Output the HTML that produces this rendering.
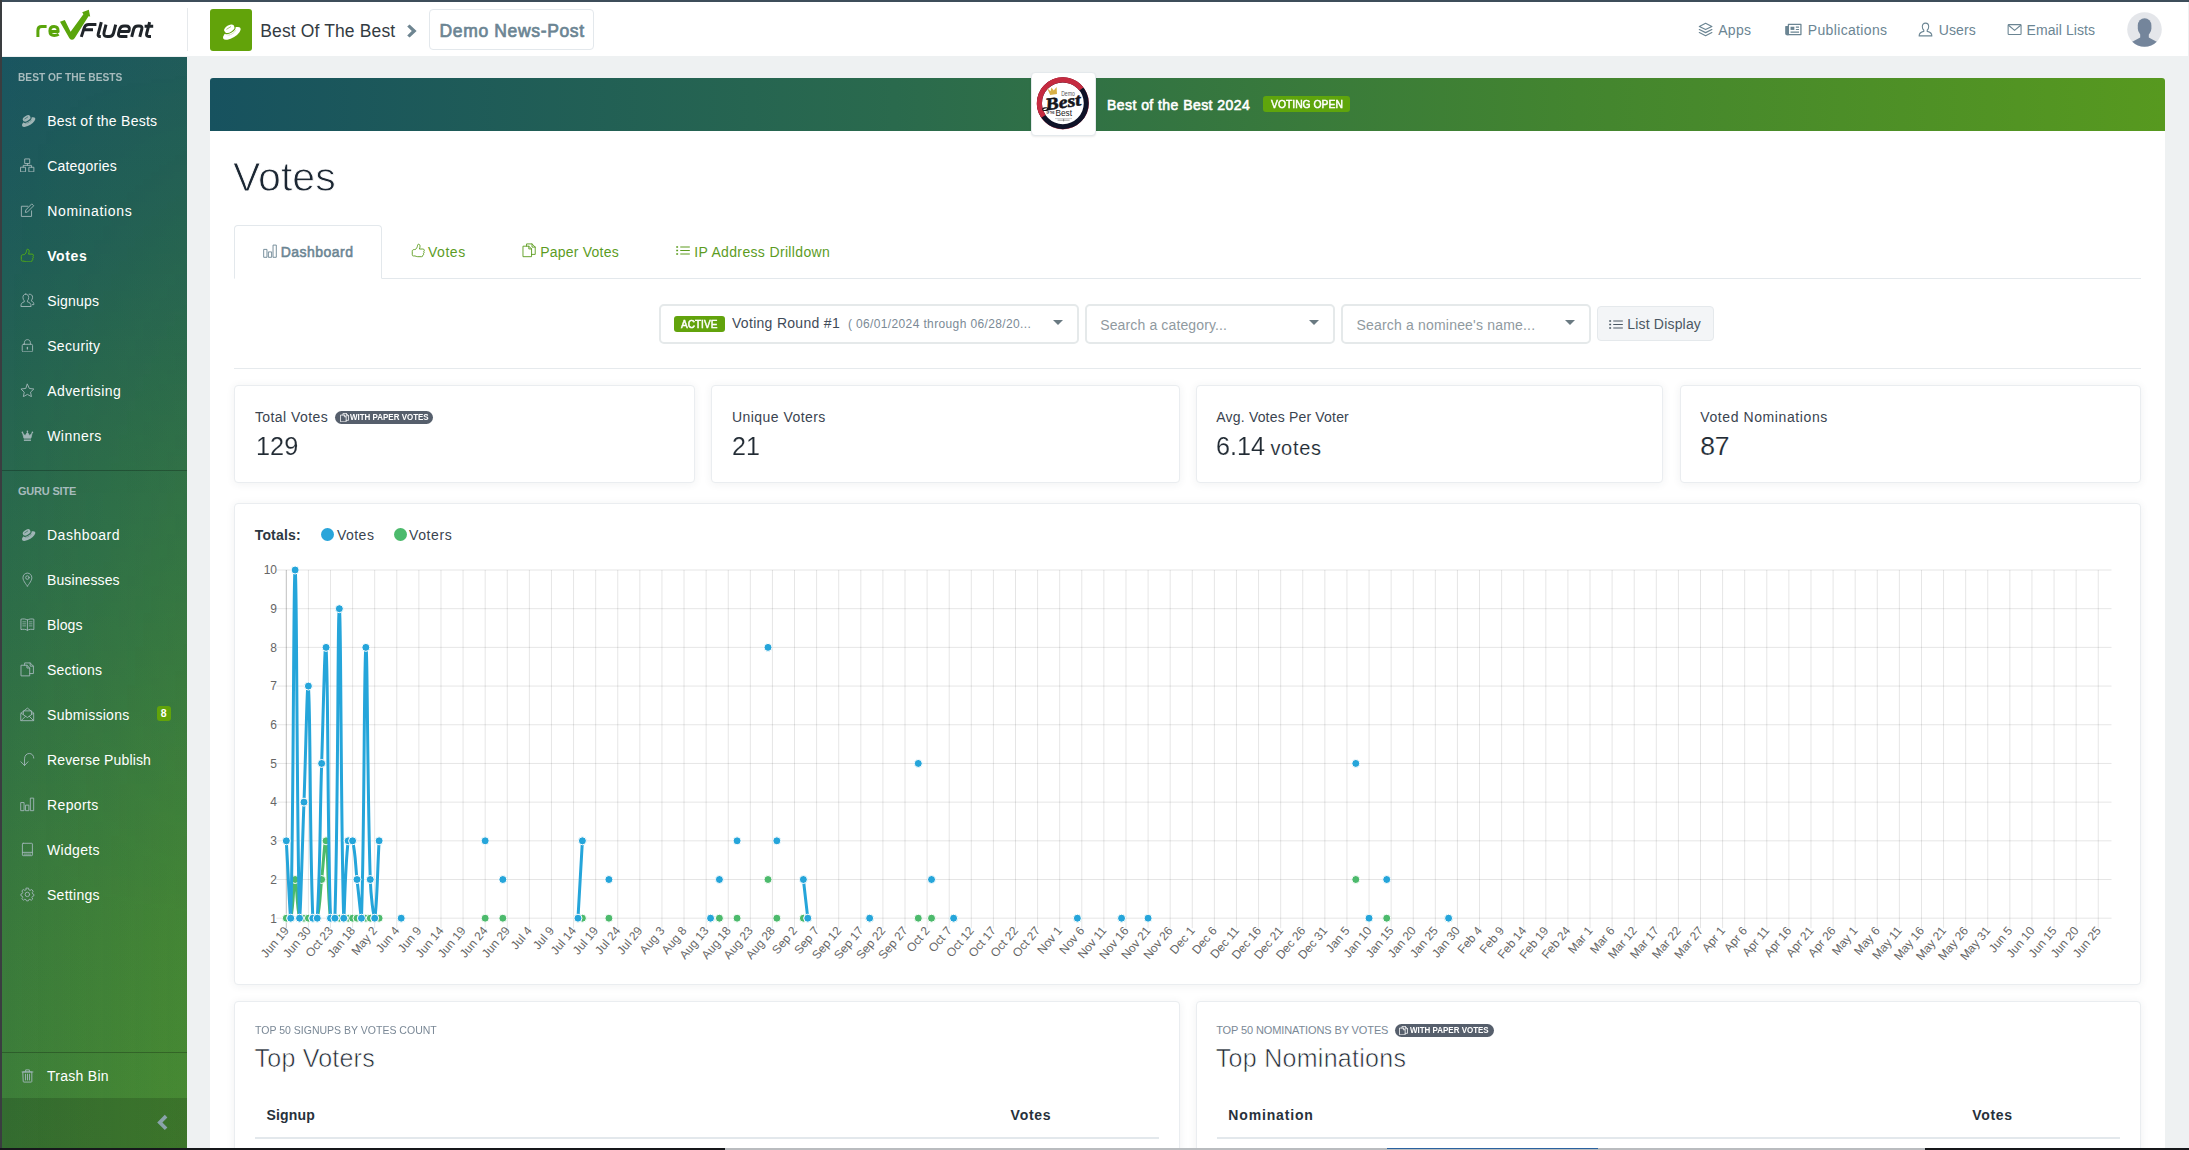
<!DOCTYPE html>
<html><head><meta charset="utf-8"><title>Votes</title>
<style>
html,body{margin:0;padding:0;}
body{width:2189px;height:1150px;overflow:hidden;position:relative;background:#eef1f2;font-family:"Liberation Sans",sans-serif;}
.t{position:absolute;white-space:pre;line-height:1;}
.abs{position:absolute;}
.card{position:absolute;background:#fff;border:1px solid #eaedf0;border-radius:4px;box-shadow:0 1px 9px rgba(40,55,70,0.07);box-sizing:border-box;}
.sel{position:absolute;background:#fff;border:2px solid #e5e9ea;border-radius:5px;box-sizing:border-box;}
.caret{position:absolute;width:0;height:0;border-left:5px solid transparent;border-right:5px solid transparent;border-top:5.5px solid #6a7a82;}
.pill{position:absolute;background:#565f6c;border-radius:7px;box-sizing:border-box;}
</style></head><body>
<div class="abs" style="left:0;top:0;width:2189px;height:2px;background:#3d4d5a"></div>
<div class="abs" style="left:0;top:0;width:2px;height:1150px;background:#3a3d40"></div>
<div class="abs" style="left:2px;top:2px;width:2186px;height:54px;background:#fff;"></div>
<div class="abs" style="left:187px;top:8px;width:1px;height:43px;background:#e6e9ec"></div>
<svg class="abs" style="left:30px;top:6px" width="130" height="40" viewBox="30 6 130 40">
<g fill="none" stroke="#5aa50b" stroke-width="3" stroke-linecap="butt" stroke-linejoin="round">
<path d="M37.9 37V30.4Q37.9 26.6 41.8 26.6H46.6"/>
<path d="M49.9 31.4H58.1C58.1 28.2 56.8 26.6 54.1 26.6C51.3 26.6 49.9 28.3 49.9 31C49.9 33.8 51.4 35.4 54.3 35.4C56 35.4 57.4 35 58.6 34.2"/>
</g>
<path d="M60 21.7L64.8 19.9L70.6 31.8L83.4 14.2L82.2 12.3L88.8 9.8L90.2 16.4L88.5 16.2L74.6 38.2Q72 41.2 69.4 38.2Z" fill="#5aa50b"/>
<g fill="none" stroke="#1f2429" stroke-width="3" stroke-linecap="butt" stroke-linejoin="round">
<path d="M81.3 36.9L84.3 27.6Q85.3 24.4 88.7 24.4H96.4M84.2 29.7H93"/>
<path d="M101.3 22.1L98.3 33.6Q97.5 36.6 100 36.6H100.8"/>
<path d="M106 24.6L104.1 32.2Q103 36.6 107.2 36.6H109.2Q112.6 36.6 113.5 33.2L115.7 24.6"/>
<path d="M118.8 31.4H128.8L129.2 29.8Q130 26 126 26H124Q120.6 26 119.7 29.2L118.6 33.4Q117.8 36.6 121.2 36.6H127.4"/>
<path d="M131.7 36.9L133.7 29.2Q134.5 26 137.9 26H139.2Q142.6 26 141.8 29.2L139.8 36.9"/>
<path d="M149.6 22.1L146.7 33.4Q145.9 36.6 148.8 36.6H151M144.6 26.3H153.2"/>
</g></svg>
<div class="abs" style="left:210px;top:9px;width:42px;height:42px;border-radius:3px;background:#62a30a"></div>
<svg class="abs" style="left:231.30px;top:32.20px;overflow:visible" width="1" height="1"><g transform="scale(0.950) rotate(-32)"><ellipse cx="0" cy="1.7" rx="10.6" ry="4.5" fill="#fff"/><path d="M-5.3 -4.9V-0.6A5.3 2.4 0 0 0 5.9 -0.6V-4.9Z" fill="#fff"/><ellipse cx="0.3" cy="-4.9" rx="5.6" ry="2.6" fill="#fff"/><path d="M-5.7 -2.5A5.8 2.7 0 0 0 6.3 -2.5" fill="none" stroke="#62a30a" stroke-width="1.1"/><path d="M-2.2 -4.9H2.6" fill="none" stroke="#62a30a" stroke-width="0.77" stroke-linecap="round" opacity="0.75"/><path d="M-4.6 0.9A5.6 2.4 0 0 0 5.4 0.9" fill="none" stroke="#62a30a" stroke-width="0.77" stroke-dasharray="1 1.1" opacity="0.7"/></g></svg>
<span class="t" style="left:260.26px;top:22.79px;font-size:17.5px;font-weight:400;color:#333b42;letter-spacing:0.129px;">Best Of The Best</span>
<svg class="abs" style="left:406px;top:24px" width="12" height="14" viewBox="0 0 12 14"><path d="M1.2 2.6L3.6 0.4L10.6 7L3.6 13.6L1.2 11.4L5.8 7Z" fill="#6e8591"/></svg>
<div class="abs" style="left:428.5px;top:8.5px;width:165px;height:41px;border:1px solid #e3e8ec;border-radius:4px;box-sizing:border-box;background:#fff"></div>
<span class="t" style="left:439.56px;top:22.79px;font-size:17.5px;font-weight:400;color:#6b8593;letter-spacing:0.647px;-webkit-text-stroke:0.7px #6b8593;">Demo News-Post</span>
<svg style="position:absolute;left:1698.40px;top:21.80px;color:#6b8593;" width="15.20" height="15.20" viewBox="0 0 16 16" fill="none" stroke="currentColor" stroke-width="1.25" stroke-linecap="round" stroke-linejoin="round"><path d="M8 1.4L14.6 4.7L8 8L1.4 4.7Z"/><path d="M1.4 7.9L8 11.2L14.6 7.9"/><path d="M1.4 11.1L8 14.4L14.6 11.1"/></svg>
<span class="t" style="left:1718.21px;top:23.05px;font-size:14px;font-weight:400;color:#6b8593;letter-spacing:0.318px;">Apps</span>
<svg style="position:absolute;left:1784.60px;top:21.20px;color:#6b8593;" width="17.00" height="17.00" viewBox="0 0 16 16" fill="none" stroke="currentColor" stroke-width="1.2" stroke-linecap="round" stroke-linejoin="round"><path d="M3.2 3.2H15V12.8H1.8C1.3 12.8 1 12.5 1 12V5.2H3.2Z"/><path d="M1 5.2H3.2V12.8H1.8C1.3 12.8 1 12.5 1 12Z" fill="currentColor"/><rect x="5.2" y="5.4" width="3.6" height="3" fill="currentColor" stroke="none"/><path d="M10.2 5.8H13.2M10.2 8H13.2M5.2 10.4H13.2" stroke-width="1.1" stroke-linecap="butt"/></svg>
<span class="t" style="left:1807.81px;top:23.05px;font-size:14px;font-weight:400;color:#6b8593;letter-spacing:0.343px;">Publications</span>
<svg style="position:absolute;left:1918.40px;top:21.60px;color:#6b8593;" width="15.00" height="15.00" viewBox="0 0 16 16" fill="none" stroke="currentColor" stroke-width="1.15" stroke-linecap="round" stroke-linejoin="round"><path d="M8 1.2C10.2 1.2 11.4 2.8 11.4 5C11.4 6.8 10.6 8 9.8 8.8V10C12.4 10.6 14.8 11.6 14.8 14.8H1.2C1.2 11.6 3.6 10.6 6.2 10V8.8C5.4 8 4.6 6.8 4.6 5C4.6 2.8 5.8 1.2 8 1.2Z"/></svg>
<span class="t" style="left:1938.71px;top:23.05px;font-size:14px;font-weight:400;color:#6b8593;letter-spacing:0.153px;">Users</span>
<svg style="position:absolute;left:2006.80px;top:21.60px;color:#6b8593;" width="15.20" height="15.20" viewBox="0 0 16 16" fill="none" stroke="currentColor" stroke-width="1.15" stroke-linecap="round" stroke-linejoin="round"><rect x="1.2" y="2.8" width="13.6" height="10.4" rx="0.8"/><path d="M1.6 3.4L8 8.8L14.4 3.4"/></svg>
<span class="t" style="left:2026.61px;top:23.05px;font-size:14px;font-weight:400;color:#6b8593;letter-spacing:0.069px;">Email Lists</span>
<svg class="abs" style="left:2127px;top:12px" width="35" height="35" viewBox="0 0 35 35"><defs><clipPath id="av"><circle cx="17.5" cy="17.5" r="17.3"/></clipPath></defs><circle cx="17.5" cy="17.5" r="17.3" fill="#e4e6ea"/><g clip-path="url(#av)" fill="#74859b"><rect x="10.8" y="6.2" width="13.6" height="17.6" rx="6.8" ry="7.4"/><path d="M13.2 21H21.8V25.6L30.6 30.2C31.6 30.8 32 31.6 32 33V36H3V33C3 31.6 3.4 30.8 4.4 30.2L13.2 25.6Z"/></g></svg>
<div class="abs" style="left:2px;top:57px;width:185px;height:1091px;background:linear-gradient(90deg,rgba(100,170,10,0) 0%,rgba(100,170,10,0.08) 100%),linear-gradient(180deg,#1a5560 0%,#1f5c58 17.7%,#27664f 35%,#2a6a4c 43%,#3a7a3c 81%,#3e7f39 100%);"></div>
<div class="abs" style="left:2px;top:57px;width:185px;height:1091px;background:linear-gradient(90deg,rgba(140,220,20,0),rgba(140,220,20,0.09));-webkit-mask-image:linear-gradient(180deg,transparent 0%,#000 80%);mask-image:linear-gradient(180deg,transparent 0%,#000 80%);"></div>
<div class="abs" style="left:2px;top:470px;width:185px;height:1px;background:rgba(0,0,0,0.25)"></div>
<div class="abs" style="left:2px;top:1052px;width:185px;height:1px;background:rgba(0,0,0,0.25)"></div>
<div class="abs" style="left:2px;top:1098px;width:185px;height:50px;background:rgba(0,0,0,0.15)"></div>
<svg class="abs" style="left:155px;top:1114px" width="14" height="17" viewBox="0 0 14 17"><path d="M9.8 0.8L12.4 3.4L7.4 8.4L12.4 13.4L9.8 16L2.2 8.4Z" fill="#8aa3ab"/></svg>
<span class="t" style="left:18.17px;top:71.59px;font-size:11px;font-weight:700;color:#a7bbbd;transform-origin:0 0;transform:scaleX(0.9279);">BEST OF THE BESTS</span>
<span class="t" style="left:17.94px;top:486.29px;font-size:11px;font-weight:700;color:#a7bbbd;letter-spacing:-0.198px;">GURU SITE</span>
<svg class="abs" style="left:27.80px;top:120.60px;overflow:visible" width="1" height="1"><g transform="scale(0.720) rotate(-32)"><ellipse cx="0" cy="1.7" rx="10.6" ry="4.5" fill="#9fb5b6"/><path d="M-5.3 -4.9V-0.6A5.3 2.4 0 0 0 5.9 -0.6V-4.9Z" fill="#9fb5b6"/><ellipse cx="0.3" cy="-4.9" rx="5.6" ry="2.6" fill="#9fb5b6"/><path d="M-5.7 -2.5A5.8 2.7 0 0 0 6.3 -2.5" fill="none" stroke="#1d595b" stroke-width="1.5"/><path d="M-2.2 -4.9H2.6" fill="none" stroke="#1d595b" stroke-width="1.05" stroke-linecap="round" opacity="0.75"/><path d="M-4.6 0.9A5.6 2.4 0 0 0 5.4 0.9" fill="none" stroke="#1d595b" stroke-width="1.05" stroke-dasharray="1 1.1" opacity="0.7"/></g></svg>
<span class="t" style="left:47.21px;top:113.65px;font-size:14px;font-weight:400;color:#fff;letter-spacing:0.252px;">Best of the Bests</span>
<svg style="position:absolute;left:19.80px;top:157.60px;color:#9fb5b6;" width="14.80" height="14.80" viewBox="0 0 16 16" fill="none" stroke="currentColor" stroke-width="1.0" stroke-linecap="round" stroke-linejoin="round"><rect x="5.5" y="1" width="5" height="5"/><rect x="1" y="10" width="5" height="5"/><rect x="10" y="10" width="5" height="5"/><path d="M8 6V8M3.5 10V8H12.5V10"/></svg>
<span class="t" style="left:47.21px;top:158.65px;font-size:14px;font-weight:400;color:#fff;letter-spacing:0.197px;">Categories</span>
<svg style="position:absolute;left:19.80px;top:202.60px;color:#9fb5b6;" width="14.80" height="14.80" viewBox="0 0 16 16" fill="none" stroke="currentColor" stroke-width="1.0" stroke-linecap="round" stroke-linejoin="round"><path d="M12.5 8.5V14.5H1.5V3.5H8.5"/><path d="M13 1.2L14.8 3L8 9.8L5.8 10.2L6.2 8Z"/></svg>
<span class="t" style="left:47.21px;top:203.65px;font-size:14px;font-weight:400;color:#fff;letter-spacing:0.665px;">Nominations</span>
<svg style="position:absolute;left:19.80px;top:247.60px;color:#55b012;" width="14.80" height="14.80" viewBox="0 0 16 16" fill="none" stroke="currentColor" stroke-width="1.0" stroke-linecap="round" stroke-linejoin="round"><path d="M1.4 8.6C1.4 7.6 2.4 7.2 3.6 7.2H4.6C6 6.4 7 4.6 7.2 2.4C7.3 0.8 9.9 0.9 9.9 3.4C9.9 4.6 9.5 5.8 9.2 6.6H13C15 6.6 15 8.9 13.9 9.2C14.9 9.9 14.5 11.3 13.5 11.5C14.2 12.3 13.7 13.5 12.8 13.6C13.1 14.5 12.5 15 11.6 15H7.4C6 15 5.2 14.4 4.4 14.2H2.6C1.6 14.2 1.4 13.6 1.4 12.8Z"/></svg>
<span class="t" style="left:47.21px;top:248.65px;font-size:14px;font-weight:700;color:#fff;letter-spacing:0.596px;">Votes</span>
<svg style="position:absolute;left:19.80px;top:292.60px;color:#9fb5b6;" width="14.80" height="14.80" viewBox="0 0 16 16" fill="none" stroke="currentColor" stroke-width="1.0" stroke-linecap="round" stroke-linejoin="round"><path d="M6.2 1.2C8.2 1.2 9.4 2.8 9.4 4.8C9.4 6.4 8.8 7.6 8 8.4V9.6C10.4 10.2 12 11.2 12 14.6H1C1 11.2 2.2 10.2 4.6 9.6V8.4C3.8 7.6 3.2 6.4 3.2 4.8C3.2 2.8 4.2 1.2 6.2 1.2Z"/><path d="M9.8 1.3C12.2 1 13.6 2.6 13.6 4.6C13.6 6.2 13 7.2 12.4 7.8V8.8C14 9.4 15 10.2 15 12.6H13.4"/></svg>
<span class="t" style="left:47.21px;top:293.65px;font-size:14px;font-weight:400;color:#fff;letter-spacing:0.197px;">Signups</span>
<svg style="position:absolute;left:19.80px;top:337.60px;color:#9fb5b6;" width="14.80" height="14.80" viewBox="0 0 16 16" fill="none" stroke="currentColor" stroke-width="1.0" stroke-linecap="round" stroke-linejoin="round"><rect x="2.4" y="6.8" width="11.2" height="8.2" rx="1.4"/><path d="M4.8 6.8V4.8C4.8 0.8 11.2 0.8 11.2 4.8V6.8"/><path d="M8 10.2V11.8" stroke-width="1.4"/></svg>
<span class="t" style="left:47.21px;top:338.65px;font-size:14px;font-weight:400;color:#fff;letter-spacing:0.328px;">Security</span>
<svg style="position:absolute;left:19.80px;top:382.60px;color:#9fb5b6;" width="14.80" height="14.80" viewBox="0 0 16 16" fill="none" stroke="currentColor" stroke-width="1.0" stroke-linecap="round" stroke-linejoin="round"><path d="M8 1.3L10.1 5.9L15 6.5L11.4 9.9L12.4 14.8L8 12.3L3.6 14.8L4.6 9.9L1 6.5L5.9 5.9Z"/></svg>
<span class="t" style="left:47.21px;top:383.65px;font-size:14px;font-weight:400;color:#fff;letter-spacing:0.431px;">Advertising</span>
<svg style="position:absolute;left:19.80px;top:427.60px;color:#9fb5b6;" width="14.80" height="14.80" viewBox="0 0 16 16" fill="none" stroke="currentColor" stroke-width="1.0" stroke-linecap="round" stroke-linejoin="round"><path d="M2.9 5.6L4.2 11H11.8L13.1 5.6L10.4 8.2L8 4.6L5.6 8.2Z" fill="currentColor" stroke-width="0.8"/><circle cx="2.6" cy="4.8" r="0.9" fill="currentColor" stroke="none"/><circle cx="8" cy="3.6" r="0.9" fill="currentColor" stroke="none"/><circle cx="13.4" cy="4.8" r="0.9" fill="currentColor" stroke="none"/><path d="M4.2 13.2H11.8" stroke-width="1.5" stroke-linecap="butt"/></svg>
<span class="t" style="left:47.21px;top:428.65px;font-size:14px;font-weight:400;color:#fff;letter-spacing:0.453px;">Winners</span>
<svg class="abs" style="left:27.80px;top:534.70px;overflow:visible" width="1" height="1"><g transform="scale(0.720) rotate(-32)"><ellipse cx="0" cy="1.7" rx="10.6" ry="4.5" fill="#9fb5b6"/><path d="M-5.3 -4.9V-0.6A5.3 2.4 0 0 0 5.9 -0.6V-4.9Z" fill="#9fb5b6"/><ellipse cx="0.3" cy="-4.9" rx="5.6" ry="2.6" fill="#9fb5b6"/><path d="M-5.7 -2.5A5.8 2.7 0 0 0 6.3 -2.5" fill="none" stroke="#2a6b4c" stroke-width="1.5"/><path d="M-2.2 -4.9H2.6" fill="none" stroke="#2a6b4c" stroke-width="1.05" stroke-linecap="round" opacity="0.75"/><path d="M-4.6 0.9A5.6 2.4 0 0 0 5.4 0.9" fill="none" stroke="#2a6b4c" stroke-width="1.05" stroke-dasharray="1 1.1" opacity="0.7"/></g></svg>
<span class="t" style="left:47.01px;top:528.15px;font-size:14px;font-weight:400;color:#fff;letter-spacing:0.510px;">Dashboard</span>
<svg style="position:absolute;left:19.80px;top:572.10px;color:#9fb5b6;" width="14.80" height="14.80" viewBox="0 0 16 16" fill="none" stroke="currentColor" stroke-width="1.0" stroke-linecap="round" stroke-linejoin="round"><path d="M8 15.2C8 15.2 3.2 9.8 3.2 6.3C3.2 3.3 5.3 1.2 8 1.2C10.7 1.2 12.8 3.3 12.8 6.3C12.8 9.8 8 15.2 8 15.2Z"/><circle cx="8" cy="6" r="1.9"/></svg>
<span class="t" style="left:47.01px;top:573.15px;font-size:14px;font-weight:400;color:#fff;letter-spacing:0.109px;">Businesses</span>
<svg style="position:absolute;left:19.80px;top:617.10px;color:#9fb5b6;" width="14.80" height="14.80" viewBox="0 0 16 16" fill="none" stroke="currentColor" stroke-width="1.0" stroke-linecap="round" stroke-linejoin="round"><path d="M8 3.2C6.4 2 3.4 1.8 1 2.4V13.6C3.4 13 6.4 13.2 8 14.4C9.6 13.2 12.6 13 15 13.6V2.4C12.6 1.8 9.6 2 8 3.2ZM8 3.2V14.4"/><path d="M3 5.2H6M3 7.4H6M3 9.6H6M10 5.2H13M10 7.4H13M10 9.6H13" stroke-width="0.8"/></svg>
<span class="t" style="left:47.01px;top:618.15px;font-size:14px;font-weight:400;color:#fff;letter-spacing:0.111px;">Blogs</span>
<svg style="position:absolute;left:19.80px;top:662.10px;color:#9fb5b6;" width="14.80" height="14.80" viewBox="0 0 16 16" fill="none" stroke="currentColor" stroke-width="1.0" stroke-linecap="round" stroke-linejoin="round"><path d="M1.5 3.5H7.5L10.5 6.5V15H1.5Z"/><path d="M7.5 3.5V6.5H10.5"/><path d="M5 3.5V1H11L14.5 4.5V12.5H10.5"/><path d="M11 1V4.5H14.5"/></svg>
<span class="t" style="left:47.01px;top:663.15px;font-size:14px;font-weight:400;color:#fff;letter-spacing:0.182px;">Sections</span>
<svg style="position:absolute;left:19.80px;top:707.10px;color:#9fb5b6;" width="14.80" height="14.80" viewBox="0 0 16 16" fill="none" stroke="currentColor" stroke-width="1.0" stroke-linecap="round" stroke-linejoin="round"><path d="M1.2 6.6L8 1.2L14.8 6.6V14.8H1.2Z"/><path d="M1.2 6.6L8 11.4L14.8 6.6"/><path d="M1.4 14.6L6 10M14.6 14.6L10 10"/><path d="M3.6 8V4.2H12.4V8" /></svg>
<span class="t" style="left:47.01px;top:708.15px;font-size:14px;font-weight:400;color:#fff;letter-spacing:0.290px;">Submissions</span>
<svg style="position:absolute;left:19.80px;top:752.10px;color:#9fb5b6;" width="14.80" height="14.80" viewBox="0 0 16 16" fill="none" stroke="currentColor" stroke-width="1.0" stroke-linecap="round" stroke-linejoin="round"><path d="M4.9 14.6V7.4C4.9 3.9 7.2 1.6 10 1.6C12.8 1.6 14.8 3.6 14.9 6.6"/><path d="M1 10.6L4.9 14.6L8.6 10.6"/></svg>
<span class="t" style="left:47.01px;top:753.15px;font-size:14px;font-weight:400;color:#fff;letter-spacing:0.138px;">Reverse Publish</span>
<svg style="position:absolute;left:19.80px;top:797.10px;color:#9fb5b6;" width="14.80" height="14.80" viewBox="0 0 16 16" fill="none" stroke="currentColor" stroke-width="1.0" stroke-linecap="round" stroke-linejoin="round"><rect x="1.2" y="6" width="3.2" height="8.8"/><rect x="6.4" y="8.8" width="3.2" height="6"/><rect x="11.6" y="1.2" width="3.2" height="13.6"/></svg>
<span class="t" style="left:47.01px;top:798.15px;font-size:14px;font-weight:400;color:#fff;letter-spacing:0.391px;">Reports</span>
<svg style="position:absolute;left:19.80px;top:842.10px;color:#9fb5b6;" width="14.80" height="14.80" viewBox="0 0 16 16" fill="none" stroke="currentColor" stroke-width="1.0" stroke-linecap="round" stroke-linejoin="round"><rect x="2.6" y="1.4" width="10.8" height="13.4" rx="0.8"/><path d="M2.6 11.2H13.4"/><path d="M4.4 13.1H11.6" stroke-width="0.9" stroke-dasharray="1.2 0.8"/></svg>
<span class="t" style="left:47.01px;top:843.15px;font-size:14px;font-weight:400;color:#fff;letter-spacing:0.333px;">Widgets</span>
<svg style="position:absolute;left:19.80px;top:887.10px;color:#9fb5b6;" width="14.80" height="14.80" viewBox="0 0 16 16" fill="none" stroke="currentColor" stroke-width="1.0" stroke-linecap="round" stroke-linejoin="round"><circle cx="8" cy="8" r="2.4"/><path d="M6.8 1.2H9.2L9.6 3.1L10.9 3.7L12.6 2.7L14.2 4.6L13.2 6.2L13.6 7.4L15 8V9.6L13.4 10.2L12.9 11.4L13.8 13L12.1 14.4L10.7 13.3L9.5 13.7L9 15H7L6.4 13.6L5.2 13.2L3.7 14.2L2 12.6L3 11.2L2.5 10L1 9.4V7.6L2.5 7L3 5.7L2 4.2L3.6 2.7L5.1 3.6L6.3 3.1Z"/></svg>
<span class="t" style="left:47.01px;top:888.15px;font-size:14px;font-weight:400;color:#fff;letter-spacing:0.283px;">Settings</span>
<div class="abs" style="left:157px;top:706px;width:14px;height:14.5px;border-radius:3px;background:#62a30a"></div>
<span class="t" style="left:160.76px;top:708.01px;font-size:10.5px;font-weight:700;color:#fff;letter-spacing:0.838px;">8</span>
<svg style="position:absolute;left:19.80px;top:1067.90px;color:#9fb5b6;" width="15.00" height="15.00" viewBox="0 0 16 16" fill="none" stroke="currentColor" stroke-width="1.0" stroke-linecap="round" stroke-linejoin="round"><path d="M3.4 4.2H12.6V14.4C12.6 14.8 12.3 15 12 15H4C3.7 15 3.4 14.8 3.4 14.4Z"/><path d="M2.2 4.2H13.8M6 4V2H10V4"/><path d="M5.9 6.6V12.8M8 6.6V12.8M10.1 6.6V12.8"/></svg>
<span class="t" style="left:47.01px;top:1068.85px;font-size:14px;font-weight:400;color:#fff;letter-spacing:0.273px;">Trash Bin</span>
<div class="abs" style="left:210px;top:78px;width:1955px;height:1072px;background:#fff;border-radius:3px 3px 0 0"></div>
<div class="abs" style="left:210px;top:78px;width:1955px;height:52.5px;border-radius:3px 3px 0 0;background:linear-gradient(90deg,#17525f 0%,#2a6a4d 35%,#43852f 70%,#57991f 100%)"></div>
<div class="abs" style="left:1031px;top:71.5px;width:65px;height:64px;background:#fff;border:1.5px solid #e4e9ec;border-radius:4px;box-sizing:border-box;box-shadow:0 1px 2px rgba(0,0,0,0.08)"></div>
<svg class="abs" style="left:1032px;top:72px" width="64" height="64" viewBox="1032 72 64 64">
<circle cx="1062.85" cy="103.30" r="25.6" fill="#fff" stroke="#c8283e" stroke-width="0.9"/>
<circle cx="1062.85" cy="103.30" r="23.40" fill="none" stroke="#0f1328" stroke-width="5"/>
<path d="M1081.39 89.02A23.40 23.40 0 0 0 1043.45 116.39" fill="none" stroke="#c52b40" stroke-width="5.2"/>
<path d="M1047.2 88.2L1050.6 91.2L1051.4 87.4L1053.8 90.4L1056.6 87L1057 94L1050.2 95Z" fill="#d8b046"/>
<text x="1061.2" y="96.3" font-family="'Liberation Sans',sans-serif" font-size="6.6" fill="#555" textLength="13.6" lengthAdjust="spacingAndGlyphs">Demo</text>
<g transform="rotate(-9 1061 101)"><text x="1045" y="108.2" font-family="'Liberation Serif',serif" font-style="italic" font-weight="700" font-size="17.5" fill="#15151b" stroke="#15151b" stroke-width="0.55" textLength="35.5" lengthAdjust="spacingAndGlyphs">Best</text>
<ellipse cx="1044.2" cy="106.6" rx="2.6" ry="1.3" fill="none" stroke="#15151b" stroke-width="1.1"/></g>
<text x="1055.4" y="115.8" font-family="'Liberation Sans',sans-serif" font-weight="400" font-size="9.8" fill="#1b1b22" textLength="16.6" lengthAdjust="spacingAndGlyphs">Best</text>
<text x="1046.4" y="113.6" font-family="'Liberation Sans',sans-serif" font-weight="700" font-size="3.8" fill="#1b1b22" textLength="8" lengthAdjust="spacingAndGlyphs">OF THE</text>
<path d="M1055 118.6H1072" stroke="#999" stroke-width="0.5"/><path d="M1057.6 120.2H1069.6M1063.6 118.8V121.4" stroke="#444" stroke-width="0.5"/>
</svg>
<span class="t" style="left:1107.01px;top:97.75px;font-size:14px;font-weight:400;color:#fff;letter-spacing:0.445px;-webkit-text-stroke:0.6px #fff;">Best of the Best 2024</span>
<div class="abs" style="left:1263px;top:96px;width:87px;height:16px;border-radius:3px;background:#5fa50c"></div>
<span class="t" style="left:1270.97px;top:98.69px;font-size:11px;font-weight:400;color:#fff;transform-origin:0 0;transform:scaleX(0.9406);-webkit-text-stroke:0.5px #fff;">VOTING OPEN</span>
<span class="t" style="left:232.88px;top:156.27px;font-size:41.5px;font-weight:400;color:#1c2733;transform-origin:0 0;transform:scaleX(0.9885);-webkit-text-stroke:0.9px #fff;">Votes</span>
<div class="abs" style="left:234px;top:278px;width:1907px;height:1px;background:#e3e8ec"></div>
<div class="abs" style="left:234px;top:224.5px;width:148px;height:54.5px;border:1px solid #e3e8ec;border-bottom:1px solid #fff;border-radius:4px 4px 0 0;box-sizing:border-box;background:#fff"></div>
<svg style="position:absolute;left:263.00px;top:243.60px;color:#6b8593;" width="14.40" height="14.40" viewBox="0 0 16 16" fill="none" stroke="currentColor" stroke-width="1.0" stroke-linecap="round" stroke-linejoin="round"><rect x="1.2" y="6" width="3.2" height="8.8"/><rect x="6.4" y="8.8" width="3.2" height="6"/><rect x="11.6" y="1.2" width="3.2" height="13.6"/></svg>
<span class="t" style="left:280.81px;top:244.75px;font-size:14px;font-weight:400;color:#6b8593;letter-spacing:0.460px;-webkit-text-stroke:0.55px #6b8593;">Dashboard</span>
<svg style="position:absolute;left:410.60px;top:243.20px;color:#5c9c1f;" width="14.60" height="14.60" viewBox="0 0 16 16" fill="none" stroke="currentColor" stroke-width="1.0" stroke-linecap="round" stroke-linejoin="round"><path d="M1.4 8.6C1.4 7.6 2.4 7.2 3.6 7.2H4.6C6 6.4 7 4.6 7.2 2.4C7.3 0.8 9.9 0.9 9.9 3.4C9.9 4.6 9.5 5.8 9.2 6.6H13C15 6.6 15 8.9 13.9 9.2C14.9 9.9 14.5 11.3 13.5 11.5C14.2 12.3 13.7 13.5 12.8 13.6C13.1 14.5 12.5 15 11.6 15H7.4C6 15 5.2 14.4 4.4 14.2H2.6C1.6 14.2 1.4 13.6 1.4 12.8Z"/></svg>
<span class="t" style="left:427.91px;top:244.75px;font-size:14px;font-weight:400;color:#5c9c1f;letter-spacing:0.561px;">Votes</span>
<svg style="position:absolute;left:522.40px;top:243.20px;color:#5c9c1f;" width="14.60" height="14.60" viewBox="0 0 16 16" fill="none" stroke="currentColor" stroke-width="1.0" stroke-linecap="round" stroke-linejoin="round"><path d="M1.5 3.5H7.5L10.5 6.5V15H1.5Z"/><path d="M7.5 3.5V6.5H10.5"/><path d="M5 3.5V1H11L14.5 4.5V12.5H10.5"/><path d="M11 1V4.5H14.5"/></svg>
<span class="t" style="left:540.21px;top:244.75px;font-size:14px;font-weight:400;color:#5c9c1f;letter-spacing:0.219px;">Paper Votes</span>
<svg style="position:absolute;left:674.70px;top:243.30px;color:#5c9c1f;" width="15.00" height="15.00" viewBox="0 0 16 16" fill="none" stroke="currentColor" stroke-width="1.0" stroke-linecap="round" stroke-linejoin="round"><g stroke-linecap="butt"><path d="M5.6 4.2H15.8M5.6 8H15.8M5.6 11.8H15.8" stroke-width="1.15"/><path d="M1.3 4.2H3.3M1.3 8H3.3M1.3 11.8H3.3" stroke-width="1.6"/></g></svg>
<span class="t" style="left:694.31px;top:244.75px;font-size:14px;font-weight:400;color:#5c9c1f;letter-spacing:0.345px;">IP Address Drilldown</span>
<div class="sel" style="left:659px;top:304px;width:420px;height:40px"></div>
<div class="abs" style="left:674px;top:316px;width:51px;height:16px;border-radius:3px;background:#62a30c"></div>
<span class="t" style="left:680.88px;top:318.59px;font-size:11px;font-weight:400;color:#fff;transform-origin:0 0;transform:scaleX(0.9147);-webkit-text-stroke:0.5px #fff;">ACTIVE</span>
<span class="t" style="left:732.01px;top:316.05px;font-size:14px;font-weight:400;color:#3f4b59;letter-spacing:0.296px;">Voting Round #1</span>
<span class="t" style="left:847.90px;top:317.74px;font-size:12px;font-weight:400;color:#7b8a96;letter-spacing:0.369px;">( 06/01/2024 through 06/28/20...</span>
<div class="caret" style="left:1053px;top:320px"></div>
<div class="sel" style="left:1085px;top:304px;width:249.5px;height:40px"></div>
<span class="t" style="left:1100.21px;top:317.95px;font-size:14px;font-weight:400;color:#909a9f;letter-spacing:0.133px;">Search a category...</span>
<div class="caret" style="left:1309px;top:320px"></div>
<div class="sel" style="left:1341px;top:304px;width:249.5px;height:40px"></div>
<span class="t" style="left:1356.41px;top:317.95px;font-size:14px;font-weight:400;color:#909a9f;letter-spacing:0.191px;">Search a nominee&#39;s name...</span>
<div class="caret" style="left:1564.5px;top:320px"></div>
<div class="abs" style="left:1597px;top:306px;width:117px;height:35px;background:#f3f5f7;border:1px solid #e5e9ec;border-radius:4px;box-sizing:border-box"></div>
<svg style="position:absolute;left:1607.70px;top:316.50px;color:#4a5763;" width="15.00" height="15.00" viewBox="0 0 16 16" fill="none" stroke="currentColor" stroke-width="1.0" stroke-linecap="round" stroke-linejoin="round"><g stroke-linecap="butt"><path d="M5.6 4.2H15.8M5.6 8H15.8M5.6 11.8H15.8" stroke-width="1.15"/><path d="M1.3 4.2H3.3M1.3 8H3.3M1.3 11.8H3.3" stroke-width="1.6"/></g></svg>
<span class="t" style="left:1627.31px;top:316.75px;font-size:14px;font-weight:400;color:#4a5763;letter-spacing:0.180px;">List Display</span>
<div class="abs" style="left:234px;top:368px;width:1907px;height:1px;background:#e6eaed"></div>
<div class="card" style="left:234px;top:385px;width:460.6px;height:98px"></div>
<div class="card" style="left:711px;top:385px;width:468.7px;height:98px"></div>
<div class="card" style="left:1196px;top:385px;width:467.4px;height:98px"></div>
<div class="card" style="left:1680px;top:385px;width:460.5px;height:98px"></div>
<span class="t" style="left:254.91px;top:410.15px;font-size:14px;font-weight:400;color:#3a4450;letter-spacing:0.428px;">Total Votes</span>
<div class="pill" style="left:335px;top:410.8px;width:98px;height:13.2px"></div>
<svg style="position:absolute;left:339.60px;top:412.60px;color:#fff;" width="9.40" height="9.40" viewBox="0 0 16 16" fill="none" stroke="currentColor" stroke-width="1.3" stroke-linecap="round" stroke-linejoin="round"><path d="M1.5 3.5H7.5L10.5 6.5V15H1.5Z"/><path d="M7.5 3.5V6.5H10.5"/><path d="M5 3.5V1H11L14.5 4.5V12.5H10.5"/><path d="M11 1V4.5H14.5"/></svg>
<span class="t" style="left:350.07px;top:413.20px;font-size:8.5px;font-weight:700;color:#fff;transform-origin:0 0;transform:scaleX(0.9376);">WITH PAPER VOTES</span>
<span class="t" style="left:255.54px;top:432.87px;font-size:26.5px;font-weight:400;color:#222b34;transform-origin:0 0;transform:scaleX(0.9549);-webkit-text-stroke:0.15px #fff;">129</span>
<span class="t" style="left:732.01px;top:410.15px;font-size:14px;font-weight:400;color:#3a4450;letter-spacing:0.452px;">Unique Voters</span>
<span class="t" style="left:732.15px;top:432.87px;font-size:26.5px;font-weight:400;color:#222b34;transform-origin:0 0;transform:scaleX(0.9465);-webkit-text-stroke:0.15px #fff;">21</span>
<span class="t" style="left:1216.31px;top:410.15px;font-size:14px;font-weight:400;color:#3a4450;letter-spacing:0.186px;">Avg. Votes Per Voter</span>
<span class="t" style="left:1216.34px;top:432.87px;font-size:26.5px;font-weight:400;color:#222b34;transform-origin:0 0;transform:scaleX(0.9503);-webkit-text-stroke:0.15px #fff;">6.14</span>
<span class="t" style="left:1270.46px;top:438.37px;font-size:20px;font-weight:400;color:#222b34;letter-spacing:0.667px;-webkit-text-stroke:0.15px #fff;">votes</span>
<span class="t" style="left:1700.31px;top:410.15px;font-size:14px;font-weight:400;color:#3a4450;letter-spacing:0.590px;">Voted Nominations</span>
<span class="t" style="left:1700.29px;top:432.87px;font-size:26.5px;font-weight:400;color:#222b34;letter-spacing:-0.158px;-webkit-text-stroke:0.15px #fff;">87</span>
<div class="card" style="left:234px;top:503px;width:1906.5px;height:482px"></div>
<span class="t" style="left:254.71px;top:528.15px;font-size:14px;font-weight:700;color:#2c3742;letter-spacing:0.169px;">Totals:</span>
<div class="abs" style="left:320.9px;top:527.9px;width:12.9px;height:12.9px;border-radius:50%;background:#2aa5da"></div>
<span class="t" style="left:336.91px;top:528.15px;font-size:14px;font-weight:400;color:#3a4450;letter-spacing:0.486px;">Votes</span>
<div class="abs" style="left:393.9px;top:527.9px;width:12.9px;height:12.9px;border-radius:50%;background:#4cba6c"></div>
<span class="t" style="left:408.91px;top:528.15px;font-size:14px;font-weight:400;color:#3a4450;letter-spacing:0.655px;">Voters</span>
<svg class="chart" style="position:absolute;left:234px;top:503px" width="1907" height="482" viewBox="234 503 1907 482" font-family="'Liberation Sans',sans-serif" font-size="12" fill="#666">
<path d="M308.40 570.00V928.20M330.49 570.00V928.20M352.59 570.00V928.20M374.69 570.00V928.20M396.78 570.00V928.20M418.88 570.00V928.20M440.98 570.00V928.20M463.07 570.00V928.20M485.17 570.00V928.20M507.27 570.00V928.20M529.37 570.00V928.20M551.46 570.00V928.20M573.56 570.00V928.20M595.66 570.00V928.20M617.75 570.00V928.20M639.85 570.00V928.20M661.95 570.00V928.20M684.04 570.00V928.20M706.14 570.00V928.20M728.24 570.00V928.20M750.33 570.00V928.20M772.43 570.00V928.20M794.53 570.00V928.20M816.62 570.00V928.20M838.72 570.00V928.20M860.82 570.00V928.20M882.92 570.00V928.20M905.01 570.00V928.20M927.11 570.00V928.20M949.21 570.00V928.20M971.30 570.00V928.20M993.40 570.00V928.20M1015.50 570.00V928.20M1037.59 570.00V928.20M1059.69 570.00V928.20M1081.79 570.00V928.20M1103.88 570.00V928.20M1125.98 570.00V928.20M1148.08 570.00V928.20M1170.17 570.00V928.20M1192.27 570.00V928.20M1214.37 570.00V928.20M1236.46 570.00V928.20M1258.56 570.00V928.20M1280.66 570.00V928.20M1302.76 570.00V928.20M1324.85 570.00V928.20M1346.95 570.00V928.20M1369.05 570.00V928.20M1391.14 570.00V928.20M1413.24 570.00V928.20M1435.34 570.00V928.20M1457.43 570.00V928.20M1479.53 570.00V928.20M1501.63 570.00V928.20M1523.72 570.00V928.20M1545.82 570.00V928.20M1567.92 570.00V928.20M1590.01 570.00V928.20M1612.11 570.00V928.20M1634.21 570.00V928.20M1656.30 570.00V928.20M1678.40 570.00V928.20M1700.50 570.00V928.20M1722.60 570.00V928.20M1744.69 570.00V928.20M1766.79 570.00V928.20M1788.89 570.00V928.20M1810.98 570.00V928.20M1833.08 570.00V928.20M1855.18 570.00V928.20M1877.27 570.00V928.20M1899.37 570.00V928.20M1921.47 570.00V928.20M1943.56 570.00V928.20M1965.66 570.00V928.20M1987.76 570.00V928.20M2009.85 570.00V928.20M2031.95 570.00V928.20M2054.05 570.00V928.20M2076.15 570.00V928.20M2098.24 570.00V928.20M276.30 918.20H2111.50M276.30 879.51H2111.50M276.30 840.82H2111.50M276.30 802.13H2111.50M276.30 763.44H2111.50M276.30 724.76H2111.50M276.30 686.07H2111.50M276.30 647.38H2111.50M276.30 608.69H2111.50M276.30 570.00H2111.50" stroke="rgba(0,0,0,0.1)" stroke-width="1" fill="none"/>
<path d="M286.30 570.00V928.20" stroke="rgba(0,0,0,0.25)" stroke-width="1" fill="none"/>
<text x="277.0" y="922.50" text-anchor="end">1</text>
<text x="277.0" y="883.81" text-anchor="end">2</text>
<text x="277.0" y="845.12" text-anchor="end">3</text>
<text x="277.0" y="806.43" text-anchor="end">4</text>
<text x="277.0" y="767.74" text-anchor="end">5</text>
<text x="277.0" y="729.06" text-anchor="end">6</text>
<text x="277.0" y="690.37" text-anchor="end">7</text>
<text x="277.0" y="651.68" text-anchor="end">8</text>
<text x="277.0" y="612.99" text-anchor="end">9</text>
<text x="277.0" y="574.30" text-anchor="end">10</text>
<text transform="translate(286.30 928.20) rotate(-50)" text-anchor="end" dy="0.35em">Jun 19</text>
<text transform="translate(308.40 928.20) rotate(-50)" text-anchor="end" dy="0.35em">Jun 30</text>
<text transform="translate(330.49 928.20) rotate(-50)" text-anchor="end" dy="0.35em">Oct 23</text>
<text transform="translate(352.59 928.20) rotate(-50)" text-anchor="end" dy="0.35em">Jan 18</text>
<text transform="translate(374.69 928.20) rotate(-50)" text-anchor="end" dy="0.35em">May 2</text>
<text transform="translate(396.78 928.20) rotate(-50)" text-anchor="end" dy="0.35em">Jun 4</text>
<text transform="translate(418.88 928.20) rotate(-50)" text-anchor="end" dy="0.35em">Jun 9</text>
<text transform="translate(440.98 928.20) rotate(-50)" text-anchor="end" dy="0.35em">Jun 14</text>
<text transform="translate(463.07 928.20) rotate(-50)" text-anchor="end" dy="0.35em">Jun 19</text>
<text transform="translate(485.17 928.20) rotate(-50)" text-anchor="end" dy="0.35em">Jun 24</text>
<text transform="translate(507.27 928.20) rotate(-50)" text-anchor="end" dy="0.35em">Jun 29</text>
<text transform="translate(529.37 928.20) rotate(-50)" text-anchor="end" dy="0.35em">Jul 4</text>
<text transform="translate(551.46 928.20) rotate(-50)" text-anchor="end" dy="0.35em">Jul 9</text>
<text transform="translate(573.56 928.20) rotate(-50)" text-anchor="end" dy="0.35em">Jul 14</text>
<text transform="translate(595.66 928.20) rotate(-50)" text-anchor="end" dy="0.35em">Jul 19</text>
<text transform="translate(617.75 928.20) rotate(-50)" text-anchor="end" dy="0.35em">Jul 24</text>
<text transform="translate(639.85 928.20) rotate(-50)" text-anchor="end" dy="0.35em">Jul 29</text>
<text transform="translate(661.95 928.20) rotate(-50)" text-anchor="end" dy="0.35em">Aug 3</text>
<text transform="translate(684.04 928.20) rotate(-50)" text-anchor="end" dy="0.35em">Aug 8</text>
<text transform="translate(706.14 928.20) rotate(-50)" text-anchor="end" dy="0.35em">Aug 13</text>
<text transform="translate(728.24 928.20) rotate(-50)" text-anchor="end" dy="0.35em">Aug 18</text>
<text transform="translate(750.33 928.20) rotate(-50)" text-anchor="end" dy="0.35em">Aug 23</text>
<text transform="translate(772.43 928.20) rotate(-50)" text-anchor="end" dy="0.35em">Aug 28</text>
<text transform="translate(794.53 928.20) rotate(-50)" text-anchor="end" dy="0.35em">Sep 2</text>
<text transform="translate(816.62 928.20) rotate(-50)" text-anchor="end" dy="0.35em">Sep 7</text>
<text transform="translate(838.72 928.20) rotate(-50)" text-anchor="end" dy="0.35em">Sep 12</text>
<text transform="translate(860.82 928.20) rotate(-50)" text-anchor="end" dy="0.35em">Sep 17</text>
<text transform="translate(882.92 928.20) rotate(-50)" text-anchor="end" dy="0.35em">Sep 22</text>
<text transform="translate(905.01 928.20) rotate(-50)" text-anchor="end" dy="0.35em">Sep 27</text>
<text transform="translate(927.11 928.20) rotate(-50)" text-anchor="end" dy="0.35em">Oct 2</text>
<text transform="translate(949.21 928.20) rotate(-50)" text-anchor="end" dy="0.35em">Oct 7</text>
<text transform="translate(971.30 928.20) rotate(-50)" text-anchor="end" dy="0.35em">Oct 12</text>
<text transform="translate(993.40 928.20) rotate(-50)" text-anchor="end" dy="0.35em">Oct 17</text>
<text transform="translate(1015.50 928.20) rotate(-50)" text-anchor="end" dy="0.35em">Oct 22</text>
<text transform="translate(1037.59 928.20) rotate(-50)" text-anchor="end" dy="0.35em">Oct 27</text>
<text transform="translate(1059.69 928.20) rotate(-50)" text-anchor="end" dy="0.35em">Nov 1</text>
<text transform="translate(1081.79 928.20) rotate(-50)" text-anchor="end" dy="0.35em">Nov 6</text>
<text transform="translate(1103.88 928.20) rotate(-50)" text-anchor="end" dy="0.35em">Nov 11</text>
<text transform="translate(1125.98 928.20) rotate(-50)" text-anchor="end" dy="0.35em">Nov 16</text>
<text transform="translate(1148.08 928.20) rotate(-50)" text-anchor="end" dy="0.35em">Nov 21</text>
<text transform="translate(1170.17 928.20) rotate(-50)" text-anchor="end" dy="0.35em">Nov 26</text>
<text transform="translate(1192.27 928.20) rotate(-50)" text-anchor="end" dy="0.35em">Dec 1</text>
<text transform="translate(1214.37 928.20) rotate(-50)" text-anchor="end" dy="0.35em">Dec 6</text>
<text transform="translate(1236.46 928.20) rotate(-50)" text-anchor="end" dy="0.35em">Dec 11</text>
<text transform="translate(1258.56 928.20) rotate(-50)" text-anchor="end" dy="0.35em">Dec 16</text>
<text transform="translate(1280.66 928.20) rotate(-50)" text-anchor="end" dy="0.35em">Dec 21</text>
<text transform="translate(1302.76 928.20) rotate(-50)" text-anchor="end" dy="0.35em">Dec 26</text>
<text transform="translate(1324.85 928.20) rotate(-50)" text-anchor="end" dy="0.35em">Dec 31</text>
<text transform="translate(1346.95 928.20) rotate(-50)" text-anchor="end" dy="0.35em">Jan 5</text>
<text transform="translate(1369.05 928.20) rotate(-50)" text-anchor="end" dy="0.35em">Jan 10</text>
<text transform="translate(1391.14 928.20) rotate(-50)" text-anchor="end" dy="0.35em">Jan 15</text>
<text transform="translate(1413.24 928.20) rotate(-50)" text-anchor="end" dy="0.35em">Jan 20</text>
<text transform="translate(1435.34 928.20) rotate(-50)" text-anchor="end" dy="0.35em">Jan 25</text>
<text transform="translate(1457.43 928.20) rotate(-50)" text-anchor="end" dy="0.35em">Jan 30</text>
<text transform="translate(1479.53 928.20) rotate(-50)" text-anchor="end" dy="0.35em">Feb 4</text>
<text transform="translate(1501.63 928.20) rotate(-50)" text-anchor="end" dy="0.35em">Feb 9</text>
<text transform="translate(1523.72 928.20) rotate(-50)" text-anchor="end" dy="0.35em">Feb 14</text>
<text transform="translate(1545.82 928.20) rotate(-50)" text-anchor="end" dy="0.35em">Feb 19</text>
<text transform="translate(1567.92 928.20) rotate(-50)" text-anchor="end" dy="0.35em">Feb 24</text>
<text transform="translate(1590.01 928.20) rotate(-50)" text-anchor="end" dy="0.35em">Mar 1</text>
<text transform="translate(1612.11 928.20) rotate(-50)" text-anchor="end" dy="0.35em">Mar 6</text>
<text transform="translate(1634.21 928.20) rotate(-50)" text-anchor="end" dy="0.35em">Mar 12</text>
<text transform="translate(1656.30 928.20) rotate(-50)" text-anchor="end" dy="0.35em">Mar 17</text>
<text transform="translate(1678.40 928.20) rotate(-50)" text-anchor="end" dy="0.35em">Mar 22</text>
<text transform="translate(1700.50 928.20) rotate(-50)" text-anchor="end" dy="0.35em">Mar 27</text>
<text transform="translate(1722.60 928.20) rotate(-50)" text-anchor="end" dy="0.35em">Apr 1</text>
<text transform="translate(1744.69 928.20) rotate(-50)" text-anchor="end" dy="0.35em">Apr 6</text>
<text transform="translate(1766.79 928.20) rotate(-50)" text-anchor="end" dy="0.35em">Apr 11</text>
<text transform="translate(1788.89 928.20) rotate(-50)" text-anchor="end" dy="0.35em">Apr 16</text>
<text transform="translate(1810.98 928.20) rotate(-50)" text-anchor="end" dy="0.35em">Apr 21</text>
<text transform="translate(1833.08 928.20) rotate(-50)" text-anchor="end" dy="0.35em">Apr 26</text>
<text transform="translate(1855.18 928.20) rotate(-50)" text-anchor="end" dy="0.35em">May 1</text>
<text transform="translate(1877.27 928.20) rotate(-50)" text-anchor="end" dy="0.35em">May 6</text>
<text transform="translate(1899.37 928.20) rotate(-50)" text-anchor="end" dy="0.35em">May 11</text>
<text transform="translate(1921.47 928.20) rotate(-50)" text-anchor="end" dy="0.35em">May 16</text>
<text transform="translate(1943.56 928.20) rotate(-50)" text-anchor="end" dy="0.35em">May 21</text>
<text transform="translate(1965.66 928.20) rotate(-50)" text-anchor="end" dy="0.35em">May 26</text>
<text transform="translate(1987.76 928.20) rotate(-50)" text-anchor="end" dy="0.35em">May 31</text>
<text transform="translate(2009.85 928.20) rotate(-50)" text-anchor="end" dy="0.35em">Jun 5</text>
<text transform="translate(2031.95 928.20) rotate(-50)" text-anchor="end" dy="0.35em">Jun 10</text>
<text transform="translate(2054.05 928.20) rotate(-50)" text-anchor="end" dy="0.35em">Jun 15</text>
<text transform="translate(2076.15 928.20) rotate(-50)" text-anchor="end" dy="0.35em">Jun 20</text>
<text transform="translate(2098.24 928.20) rotate(-50)" text-anchor="end" dy="0.35em">Jun 25</text>
<path d="M286.30 918.20 C288.07 918.20 290.36 918.20 290.72 918.20 C293.89 904.30 293.37 879.51 295.14 879.51 C296.91 879.51 296.38 904.30 299.56 918.20 C299.92 918.20 302.21 918.20 303.98 918.20 C305.75 918.20 306.63 918.20 308.40 918.20 C310.16 918.20 311.05 918.20 312.82 918.20 C314.58 918.20 316.88 918.20 317.24 918.20 C320.41 904.30 319.89 894.99 321.65 879.51 C323.42 864.04 324.89 835.65 326.07 840.82 C328.43 851.12 327.15 888.92 330.49 918.20 C330.68 918.20 333.15 918.20 334.91 918.20 C336.68 918.20 337.56 918.20 339.33 918.20 C341.10 918.20 341.98 918.20 343.75 918.20 C345.52 918.20 346.40 918.20 348.17 918.20 C349.94 918.20 350.82 918.20 352.59 918.20 C354.36 918.20 355.24 918.20 357.01 918.20 C358.78 918.20 359.66 918.20 361.43 918.20 C363.20 918.20 364.08 918.20 365.85 918.20 C367.62 918.20 368.50 918.20 370.27 918.20 C372.04 918.20 372.92 918.20 374.69 918.20 C376.46 918.20 377.34 918.20 379.11 918.20 M401.20 918.20 M485.17 918.20 M502.85 918.20 M577.98 918.20 C579.75 918.20 580.63 918.20 582.40 918.20 M608.91 918.20 M710.56 918.20 M719.40 918.20 M737.08 918.20 M768.01 879.51 M776.85 918.20 M803.37 918.20 C805.13 918.20 806.02 918.20 807.79 918.20 M869.66 918.20 M918.27 918.20 M931.53 918.20 M953.62 918.20 M1077.37 918.20 M1121.56 918.20 M1148.08 918.20 M1355.79 879.51 M1369.05 918.20 M1386.72 918.20 M1448.59 918.20" stroke="#4cba6c" stroke-width="3" fill="none" stroke-linejoin="miter"/>
<g fill="#4cba6c" stroke="#fff" stroke-width="1">
<circle cx="286.30" cy="918.20" r="4"/>
<circle cx="290.72" cy="918.20" r="4"/>
<circle cx="295.14" cy="879.51" r="4"/>
<circle cx="299.56" cy="918.20" r="4"/>
<circle cx="303.98" cy="918.20" r="4"/>
<circle cx="308.40" cy="918.20" r="4"/>
<circle cx="312.82" cy="918.20" r="4"/>
<circle cx="317.24" cy="918.20" r="4"/>
<circle cx="321.65" cy="879.51" r="4"/>
<circle cx="326.07" cy="840.82" r="4"/>
<circle cx="330.49" cy="918.20" r="4"/>
<circle cx="334.91" cy="918.20" r="4"/>
<circle cx="339.33" cy="918.20" r="4"/>
<circle cx="343.75" cy="918.20" r="4"/>
<circle cx="348.17" cy="918.20" r="4"/>
<circle cx="352.59" cy="918.20" r="4"/>
<circle cx="357.01" cy="918.20" r="4"/>
<circle cx="361.43" cy="918.20" r="4"/>
<circle cx="365.85" cy="918.20" r="4"/>
<circle cx="370.27" cy="918.20" r="4"/>
<circle cx="374.69" cy="918.20" r="4"/>
<circle cx="379.11" cy="918.20" r="4"/>
<circle cx="401.20" cy="918.20" r="4"/>
<circle cx="485.17" cy="918.20" r="4"/>
<circle cx="502.85" cy="918.20" r="4"/>
<circle cx="577.98" cy="918.20" r="4"/>
<circle cx="582.40" cy="918.20" r="4"/>
<circle cx="608.91" cy="918.20" r="4"/>
<circle cx="710.56" cy="918.20" r="4"/>
<circle cx="719.40" cy="918.20" r="4"/>
<circle cx="737.08" cy="918.20" r="4"/>
<circle cx="768.01" cy="879.51" r="4"/>
<circle cx="776.85" cy="918.20" r="4"/>
<circle cx="803.37" cy="918.20" r="4"/>
<circle cx="807.79" cy="918.20" r="4"/>
<circle cx="869.66" cy="918.20" r="4"/>
<circle cx="918.27" cy="918.20" r="4"/>
<circle cx="931.53" cy="918.20" r="4"/>
<circle cx="953.62" cy="918.20" r="4"/>
<circle cx="1077.37" cy="918.20" r="4"/>
<circle cx="1121.56" cy="918.20" r="4"/>
<circle cx="1148.08" cy="918.20" r="4"/>
<circle cx="1355.79" cy="879.51" r="4"/>
<circle cx="1369.05" cy="918.20" r="4"/>
<circle cx="1386.72" cy="918.20" r="4"/>
<circle cx="1448.59" cy="918.20" r="4"/>
</g>
<path d="M286.30 840.82 C288.07 871.77 290.08 918.20 290.72 918.20 C293.61 829.59 293.37 570.00 295.14 570.00 C296.91 570.00 296.91 848.57 299.56 918.20 C300.44 918.20 302.21 848.56 303.98 802.13 C305.75 755.71 307.22 670.59 308.40 686.07 C310.75 717.01 309.35 827.08 312.82 918.20 C312.88 918.20 317.14 918.20 317.24 918.20 C320.67 858.02 319.63 825.34 321.65 763.44 C323.17 717.01 325.01 628.80 326.07 647.38 C328.55 690.70 327.01 811.61 330.49 918.20 C330.55 918.20 334.86 918.20 334.91 918.20 C338.40 796.14 337.56 608.69 339.33 608.69 C341.10 608.69 340.92 843.94 343.75 918.20 C344.46 918.20 344.83 870.10 348.17 840.82 C348.36 839.15 352.23 839.24 352.59 840.82 C355.77 854.72 355.24 864.04 357.01 879.51 C358.78 894.99 360.98 918.20 361.43 918.20 C364.52 837.02 363.94 655.71 365.85 647.38 C367.48 640.24 367.24 786.74 370.27 879.51 C370.78 895.07 373.51 918.20 374.69 918.20 C377.04 907.90 377.34 871.77 379.11 840.82 M401.20 918.20 M485.17 840.82 M502.85 879.51 M577.98 918.20 C579.75 887.25 580.63 871.77 582.40 840.82 M608.91 879.51 M710.56 918.20 M719.40 879.51 M737.08 840.82 M768.01 647.38 M776.85 840.82 M803.37 879.51 C805.13 894.99 806.02 902.72 807.79 918.20 M869.66 918.20 M918.27 763.44 M931.53 879.51 M953.62 918.20 M1077.37 918.20 M1121.56 918.20 M1148.08 918.20 M1355.79 763.44 M1369.05 918.20 M1386.72 879.51 M1448.59 918.20" stroke="#25a5da" stroke-width="3" fill="none" stroke-linejoin="miter"/>
<g fill="#25a5da" stroke="#fff" stroke-width="1">
<circle cx="286.30" cy="840.82" r="4"/>
<circle cx="290.72" cy="918.20" r="4"/>
<circle cx="295.14" cy="570.00" r="4"/>
<circle cx="299.56" cy="918.20" r="4"/>
<circle cx="303.98" cy="802.13" r="4"/>
<circle cx="308.40" cy="686.07" r="4"/>
<circle cx="312.82" cy="918.20" r="4"/>
<circle cx="317.24" cy="918.20" r="4"/>
<circle cx="321.65" cy="763.44" r="4"/>
<circle cx="326.07" cy="647.38" r="4"/>
<circle cx="330.49" cy="918.20" r="4"/>
<circle cx="334.91" cy="918.20" r="4"/>
<circle cx="339.33" cy="608.69" r="4"/>
<circle cx="343.75" cy="918.20" r="4"/>
<circle cx="348.17" cy="840.82" r="4"/>
<circle cx="352.59" cy="840.82" r="4"/>
<circle cx="357.01" cy="879.51" r="4"/>
<circle cx="361.43" cy="918.20" r="4"/>
<circle cx="365.85" cy="647.38" r="4"/>
<circle cx="370.27" cy="879.51" r="4"/>
<circle cx="374.69" cy="918.20" r="4"/>
<circle cx="379.11" cy="840.82" r="4"/>
<circle cx="401.20" cy="918.20" r="4"/>
<circle cx="485.17" cy="840.82" r="4"/>
<circle cx="502.85" cy="879.51" r="4"/>
<circle cx="577.98" cy="918.20" r="4"/>
<circle cx="582.40" cy="840.82" r="4"/>
<circle cx="608.91" cy="879.51" r="4"/>
<circle cx="710.56" cy="918.20" r="4"/>
<circle cx="719.40" cy="879.51" r="4"/>
<circle cx="737.08" cy="840.82" r="4"/>
<circle cx="768.01" cy="647.38" r="4"/>
<circle cx="776.85" cy="840.82" r="4"/>
<circle cx="803.37" cy="879.51" r="4"/>
<circle cx="807.79" cy="918.20" r="4"/>
<circle cx="869.66" cy="918.20" r="4"/>
<circle cx="918.27" cy="763.44" r="4"/>
<circle cx="931.53" cy="879.51" r="4"/>
<circle cx="953.62" cy="918.20" r="4"/>
<circle cx="1077.37" cy="918.20" r="4"/>
<circle cx="1121.56" cy="918.20" r="4"/>
<circle cx="1148.08" cy="918.20" r="4"/>
<circle cx="1355.79" cy="763.44" r="4"/>
<circle cx="1369.05" cy="918.20" r="4"/>
<circle cx="1386.72" cy="879.51" r="4"/>
<circle cx="1448.59" cy="918.20" r="4"/>
</g>
</svg>
<div class="card" style="left:234px;top:1001px;width:945.6px;height:200px"></div>
<div class="card" style="left:1196px;top:1001px;width:944.5px;height:200px"></div>
<span class="t" style="left:255.16px;top:1025.29px;font-size:11px;font-weight:400;color:#7a8896;transform-origin:0 0;transform:scaleX(0.9561);">TOP 50 SIGNUPS BY VOTES COUNT</span>
<span class="t" style="left:254.55px;top:1046.34px;font-size:25px;font-weight:400;color:#1f2933;letter-spacing:0.218px;-webkit-text-stroke:0.6px #fff;">Top Voters</span>
<span class="t" style="left:266.41px;top:1107.95px;font-size:14px;font-weight:700;color:#27313b;letter-spacing:0.168px;">Signup</span>
<span class="t" style="left:1010.61px;top:1107.95px;font-size:14px;font-weight:700;color:#27313b;letter-spacing:0.721px;">Votes</span>
<div class="abs" style="left:255.2px;top:1137px;width:903.6px;height:2px;background:#e3e8ec"></div>
<span class="t" style="left:1216.14px;top:1025.29px;font-size:11px;font-weight:400;color:#7a8896;letter-spacing:-0.112px;">TOP 50 NOMINATIONS BY VOTES</span>
<div class="pill" style="left:1394.8px;top:1023.8px;width:99px;height:13.2px"></div>
<svg style="position:absolute;left:1399.40px;top:1025.60px;color:#fff;" width="9.40" height="9.40" viewBox="0 0 16 16" fill="none" stroke="currentColor" stroke-width="1.3" stroke-linecap="round" stroke-linejoin="round"><path d="M1.5 3.5H7.5L10.5 6.5V15H1.5Z"/><path d="M7.5 3.5V6.5H10.5"/><path d="M5 3.5V1H11L14.5 4.5V12.5H10.5"/><path d="M11 1V4.5H14.5"/></svg>
<span class="t" style="left:1409.87px;top:1026.20px;font-size:8.5px;font-weight:700;color:#fff;transform-origin:0 0;transform:scaleX(0.9376);">WITH PAPER VOTES</span>
<span class="t" style="left:1215.85px;top:1046.34px;font-size:25px;font-weight:400;color:#1f2933;letter-spacing:0.277px;-webkit-text-stroke:0.6px #fff;">Top Nominations</span>
<span class="t" style="left:1228.31px;top:1107.95px;font-size:14px;font-weight:700;color:#27313b;letter-spacing:0.842px;">Nomination</span>
<span class="t" style="left:1972.21px;top:1107.95px;font-size:14px;font-weight:700;color:#27313b;letter-spacing:0.696px;">Votes</span>
<div class="abs" style="left:1216.9px;top:1137px;width:903.4px;height:2px;background:#e3e8ec"></div>
<div class="abs" style="left:0;top:1148px;width:2189px;height:2px;background:#b9bcbf"></div>
<div class="abs" style="left:0;top:1148px;width:725px;height:2px;background:#16181b"></div>
<div class="abs" style="left:1925px;top:1148px;width:264px;height:2px;background:#16181b"></div>
<div class="abs" style="left:1387px;top:1148px;width:211px;height:1px;background:#2a62a0"></div>
</body></html>
